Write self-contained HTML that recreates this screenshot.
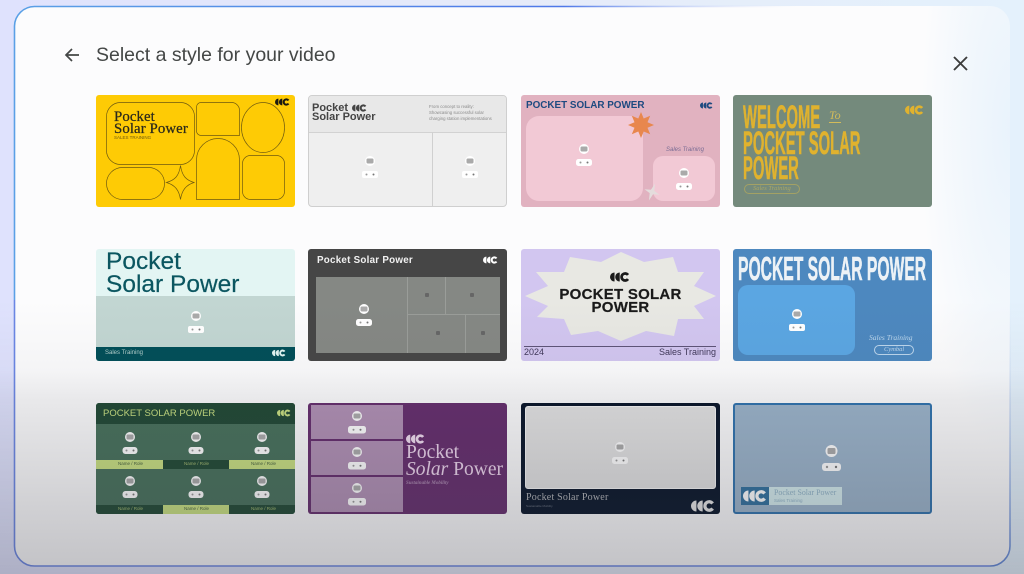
<!DOCTYPE html>
<html>
<head>
<meta charset="utf-8">
<style>
html,body{margin:0;padding:0;width:1024px;height:574px;overflow:hidden}
body{position:relative;background:linear-gradient(90deg,#dfe2fd 0%,#e6ebf9 50%,#e4f1fc 100%);font-family:"Liberation Sans",sans-serif}
#root{position:absolute;left:0;top:0;width:1024px;height:574px;filter:blur(.35px)}
#panel{position:absolute;left:14px;top:6px;width:996px;height:560px;border-radius:20px;background:radial-gradient(ellipse 90px 330px at 100% 22%,#e9f3fc 0,rgba(233,243,252,.5) 55%,rgba(252,252,253,0) 100%),#fcfcfd}
#frame{position:absolute;left:0;top:0}
#dim{position:absolute;left:0;top:0;width:1024px;height:574px;pointer-events:none;background:linear-gradient(180deg,rgba(60,60,70,0) 0,rgba(60,60,70,0) 300px,rgba(60,60,70,.04) 370px,rgba(60,60,70,.1) 400px,rgba(60,60,70,.23) 510px,rgba(60,60,70,.3) 574px)}
.card{position:absolute;width:199px;height:112px;border-radius:3px;overflow:hidden;box-sizing:border-box}
.a{position:absolute}
.t{position:absolute;line-height:1;white-space:nowrap}
.ph{position:absolute;display:block}
.logo{position:absolute;display:block}
.cond{font-weight:700;transform-origin:0 0;-webkit-text-stroke:.55px currentColor}
.ser{font-family:"Liberation Serif",serif}
</style>
</head>
<body>
<div id="root">
<div id="panel"></div>
<svg id="frame" width="1024" height="574" viewBox="0 0 1024 574" fill="none" stroke-width="1.6">
<defs>
<linearGradient id="g1" gradientUnits="userSpaceOnUse" x1="14" y1="0" x2="800" y2="0"><stop offset="0" stop-color="#5aa0e6"/><stop offset=".7" stop-color="#4f78e8"/><stop offset="1" stop-color="#dfe6fa" stop-opacity="0"/></linearGradient>
<linearGradient id="g2" gradientUnits="userSpaceOnUse" x1="0" y1="566" x2="0" y2="300"><stop offset="0" stop-color="#5f86d8"/><stop offset="1" stop-color="#cfe0f6" stop-opacity="0"/></linearGradient>
</defs>
<path d="M14.5 300V26A20 20 0 0 1 34.5 6.5H800" stroke="url(#g1)"/>
<path d="M14.5 300V546A20 20 0 0 0 34.5 566H990" stroke="#6a86e4"/>
<path d="M990 566A20 20 0 0 0 1010 546V300" stroke="url(#g2)"/>
</svg>

<svg class="a" style="left:64px;top:47px" width="16" height="16" viewBox="0 0 16 16" fill="none" stroke="#444746" stroke-width="1.7"><path d="M15 8H2M8 2L2 8l6 6"/></svg>
<div class="t" style="left:96px;top:46px;font-size:19.5px;color:#444746">Select a style for your video</div>
<svg class="a" style="left:953px;top:56px" width="15" height="15" viewBox="0 0 15 15" fill="none" stroke="#3c3c3c" stroke-width="1.9"><path d="M1 1L14 14M14 1L1 14"/></svg>

<!-- Card 1 -->
<div class="card" style="left:96px;top:95px;background:#fecb05">
<svg class="a" style="left:0;top:0" width="199" height="112" viewBox="96 95 199 112" fill="none" stroke="#6f5a10" stroke-width=".7">
<rect x="106.5" y="102.5" width="88" height="62" rx="14"/>
<path d="M196.5 107a4.5 4.5 0 0 1 4.5-4.5h30a8 8 0 0 1 8.5 8.5v24.5h-38.5a4.5 4.5 0 0 1-4.5-4.5z"/>
<ellipse cx="263" cy="127.5" rx="21.5" ry="25"/>
<path d="M196.5 199.5V160a21.5 21.5 0 0 1 43 0v39.5z"/>
<rect x="242.5" y="155.5" width="42" height="44" rx="8"/>
<rect x="106.5" y="167.5" width="58" height="32" rx="16"/>
<path d="M180.5 165.5C182 176 186 180 194 182.5C186 185 182 190 180.5 199.5C179 190 175 185 166.5 182.5C175 180 179 176 180.5 165.5Z"/>
</svg>
<div class="t ser" style="left:18px;top:16px;font-size:14.8px;line-height:12px;color:#2b2a1c;letter-spacing:.1px;-webkit-text-stroke:.25px #2b2a1c">Pocket<br>Solar Power</div>
<div class="t" style="left:18px;top:41px;font-size:4.5px;color:#6f5a10">SALES TRAINING</div>
<svg class="logo" style="left:179px;top:3px" width="15" height="8" viewBox="0 0 22 11"><path d="M5 .5A5 5 0 0 0 5 10.5ZM10.7 .5A5 5 0 0 0 10.7 10.5Z" fill="#1c1a10"/><path d="M19.8 3.2A3.9 3.9 0 1 0 19.8 7.8" fill="none" stroke="#1c1a10" stroke-width="3"/></svg>
</div>

<!-- Card 2 -->
<div class="card" style="left:308px;top:95px;background:#efefef;border:1px solid #cfcfcf;border-radius:4px">
<div class="a" style="left:0;top:0;width:197px;height:36px;background:#e8e8e8;border-bottom:1px solid #d2d2d2"></div>
<div class="a" style="left:123px;top:36px;width:1px;height:75px;background:#d0d0d0"></div>
<div class="t" style="left:3px;top:7.5px;font-size:11px;line-height:9px;font-weight:700;color:#444">Pocket<br>Solar Power</div>
<svg class="logo" style="left:43px;top:8px" width="15" height="8" viewBox="0 0 22 11"><path d="M5 .5A5 5 0 0 0 5 10.5ZM10.7 .5A5 5 0 0 0 10.7 10.5Z" fill="#444"/><path d="M19.8 3.2A3.9 3.9 0 1 0 19.8 7.8" fill="none" stroke="#444" stroke-width="3"/></svg>
<div class="t" style="left:120px;top:8px;font-size:4.3px;line-height:6px;color:#8a8a8a">From concept to reality:<br>Showcasing successful solar<br>charging station implementations</div>
<svg class="ph" style="left:52px;top:60px" width="18" height="24" viewBox="0 0 18 24"><circle cx="9" cy="5" r="5" fill="#fff"/><rect x="5.5" y="2.5" width="7" height="5" rx="1.2" fill="#aaa"/><rect x="1" y="15" width="16" height="7" rx="2" fill="#fff"/><circle cx="5.5" cy="18.5" r="1" fill="#999"/><circle cx="12.5" cy="18.5" r="1" fill="#777"/></svg>
<svg class="ph" style="left:151.5px;top:60px" width="18" height="24" viewBox="0 0 18 24"><circle cx="9" cy="5" r="5" fill="#fff"/><rect x="5.5" y="2.5" width="7" height="5" rx="1.2" fill="#aaa"/><rect x="1" y="15" width="16" height="7" rx="2" fill="#fff"/><circle cx="5.5" cy="18.5" r="1" fill="#999"/><circle cx="12.5" cy="18.5" r="1" fill="#777"/></svg>
</div>

<!-- Card 3 -->
<div class="card" style="left:521px;top:95px;background:#e1b2c0">
<div class="a" style="left:5px;top:21px;width:117px;height:85px;border-radius:13px;background:#f2c9d5"></div>
<div class="a" style="left:132px;top:61px;width:62px;height:45px;border-radius:10px;background:#f2c9d5"></div>
<div class="t" style="left:5px;top:5.5px;font-size:9.9px;font-weight:700;color:#1d4a80">POCKET SOLAR POWER</div>
<svg class="logo" style="left:179px;top:6.5px" width="13" height="7" viewBox="0 0 22 11"><path d="M5 .5A5 5 0 0 0 5 10.5ZM10.7 .5A5 5 0 0 0 10.7 10.5Z" fill="#1d4a80"/><path d="M19.8 3.2A3.9 3.9 0 1 0 19.8 7.8" fill="none" stroke="#1d4a80" stroke-width="3"/></svg>
<svg class="a" style="left:0;top:0" width="199" height="112" viewBox="0 0 199 112"><polygon transform="translate(120 30)" fill="#e8874e" points="0,-13 2.7,-6.5 9.2,-9.2 6.5,-2.7 13,0 6.5,2.7 9.2,9.2 2.7,6.5 0,13 -2.7,6.5 -9.2,9.2 -6.5,2.7 -13,0 -6.5,-2.7 -9.2,-9.2 -2.7,-6.5"/><polygon transform="translate(131 97) rotate(20)" fill="#e4dcdc" points="0,-9 1.8,-1.8 8,0 1.8,1.8 0,9 -1.8,1.8 -8,0 -1.8,-1.8"/></svg>
<div class="t" style="left:145px;top:52px;font-size:6px;font-style:italic;color:#7a6c94">Sales Training</div>
<svg class="ph" style="left:54px;top:49px" width="18" height="24" viewBox="0 0 18 24"><circle cx="9" cy="5" r="5" fill="#fff"/><rect x="5.5" y="2.5" width="7" height="5" rx="1.2" fill="#aaa"/><rect x="1" y="15" width="16" height="7" rx="2.5" fill="#fff"/><circle cx="5.5" cy="18.5" r="1" fill="#999"/><circle cx="12.5" cy="18.5" r="1" fill="#777"/></svg>
<svg class="ph" style="left:153.5px;top:73px" width="18" height="24" viewBox="0 0 18 24"><circle cx="9" cy="5" r="5" fill="#fff"/><rect x="5.5" y="2.5" width="7" height="5" rx="1.2" fill="#aaa"/><rect x="1" y="15" width="16" height="7" rx="2.5" fill="#fff"/><circle cx="5.5" cy="18.5" r="1" fill="#999"/><circle cx="12.5" cy="18.5" r="1" fill="#777"/></svg>
</div>

<!-- Card 4 -->
<div class="card" style="left:733px;top:95px;background:#748a7c">
<div class="t cond" style="left:10px;top:10px;font-size:32.5px;line-height:25.5px;color:#e0b22e;transform:scaleX(.455)">WELCOME<br>POCKET SOLAR<br>POWER</div>
<div class="t ser" style="left:96px;top:14px;font-size:12px;font-style:italic;color:#d3bb5a;border-bottom:1px solid #d3bb5a;padding-bottom:1px">To</div>
<div class="a" style="left:11px;top:89px;width:56px;height:10px;border:1px solid #a3a164;border-radius:6px;box-sizing:border-box"></div>
<div class="t ser" style="left:20px;top:91px;font-size:6.5px;font-style:italic;color:#a8a666">Sales Training</div>
<svg class="logo" style="left:172px;top:10px" width="19" height="10" viewBox="0 0 22 11"><path d="M5 .5A5 5 0 0 0 5 10.5ZM10.7 .5A5 5 0 0 0 10.7 10.5Z" fill="#e0b22e"/><path d="M19.8 3.2A3.9 3.9 0 1 0 19.8 7.8" fill="none" stroke="#e0b22e" stroke-width="3"/></svg>
</div>

<!-- Card 5 -->
<div class="card" style="left:96px;top:249px;background:#e3f5f3">
<div class="a" style="left:0;top:47px;width:199px;height:51px;background:#c2d6d2"></div>
<div class="a" style="left:0;top:98px;width:199px;height:14px;background:#014f58"></div>
<div class="t" style="left:10px;top:2px;font-size:24.5px;line-height:22.5px;color:#0b5660;-webkit-text-stroke:.2px #0b5660">Pocket<br>Solar Power</div>
<div class="t" style="left:9px;top:101px;font-size:6px;color:#b4cfcc">Sales Training</div>
<svg class="logo" style="left:176px;top:100px" width="14" height="8" viewBox="0 0 22 11"><path d="M5 .5A5 5 0 0 0 5 10.5ZM10.7 .5A5 5 0 0 0 10.7 10.5Z" fill="#e3f5f3"/><path d="M19.8 3.2A3.9 3.9 0 1 0 19.8 7.8" fill="none" stroke="#e3f5f3" stroke-width="3"/></svg>
<svg class="ph" style="left:91px;top:62px" width="18" height="24" viewBox="0 0 18 24"><circle cx="9" cy="5" r="5" fill="#fff"/><rect x="5.5" y="2.5" width="7" height="5" rx="1.2" fill="#aaa"/><rect x="1" y="15" width="16" height="7" rx="2" fill="#fff"/><circle cx="5.5" cy="18.5" r="1" fill="#999"/><circle cx="12.5" cy="18.5" r="1" fill="#777"/></svg>
</div>

<!-- Card 6 -->
<div class="card" style="left:308px;top:249px;background:#464646">
<div class="a" style="left:8px;top:28px;width:184px;height:76px;background:#858884"></div>
<div class="a" style="left:99px;top:28px;width:1px;height:76px;background:#9a9d99"></div>
<div class="a" style="left:99px;top:65px;width:93px;height:1px;background:#9a9d99"></div>
<div class="a" style="left:137px;top:28px;width:1px;height:37px;background:#9a9d99"></div>
<div class="a" style="left:157px;top:65px;width:1px;height:39px;background:#9a9d99"></div>
<div class="a" style="left:117px;top:44px;width:4px;height:4px;background:#666;border-radius:1px"></div>
<div class="a" style="left:162px;top:44px;width:4px;height:4px;background:#666;border-radius:1px"></div>
<div class="a" style="left:128px;top:82px;width:4px;height:4px;background:#666;border-radius:1px"></div>
<div class="a" style="left:173px;top:82px;width:4px;height:4px;background:#666;border-radius:1px"></div>
<div class="t" style="left:9px;top:6.5px;font-size:9.8px;font-weight:700;color:#f2f2f2;letter-spacing:.25px">Pocket Solar Power</div>
<svg class="logo" style="left:175px;top:6.5px" width="15" height="8" viewBox="0 0 22 11"><path d="M5 .5A5 5 0 0 0 5 10.5ZM10.7 .5A5 5 0 0 0 10.7 10.5Z" fill="#fff"/><path d="M19.8 3.2A3.9 3.9 0 1 0 19.8 7.8" fill="none" stroke="#fff" stroke-width="3"/></svg>
<svg class="ph" style="left:47px;top:55px" width="18" height="24" viewBox="0 0 18 24"><circle cx="9" cy="5" r="5" fill="#fff"/><rect x="5.5" y="2.5" width="7" height="5" rx="1.2" fill="#aaa"/><rect x="1" y="15" width="16" height="7" rx="2.5" fill="#fff"/><circle cx="5.5" cy="18.5" r="1" fill="#999"/><circle cx="12.5" cy="18.5" r="1" fill="#777"/></svg>
</div>

<!-- Card 7 -->
<div class="card" style="left:521px;top:249px;background:#d2c6f0">
<svg class="a" style="left:0;top:0" width="199" height="112" viewBox="0 0 199 112"><polygon fill="#e8e8e3" points="100,3 123,13 152,8 157,23 183,23 173,37 195,47 173,57 183,70 157,70 153,87 125,82 100,92 77,82 50,86 43,70 16,68 27,57 4,47 27,37 15,23 43,23 49,8 80,13"/></svg>
<svg class="logo" style="left:89px;top:23px" width="20" height="10" viewBox="0 0 22 11"><path d="M5 .5A5 5 0 0 0 5 10.5ZM10.7 .5A5 5 0 0 0 10.7 10.5Z" fill="#1a1a1a"/><path d="M19.8 3.2A3.9 3.9 0 1 0 19.8 7.8" fill="none" stroke="#1a1a1a" stroke-width="3"/></svg>
<div class="t" style="left:0;top:38.5px;width:199px;text-align:center;font-size:15px;line-height:13px;font-weight:700;color:#1a1a1a;letter-spacing:.25px;-webkit-text-stroke:.2px #1a1a1a">POCKET SOLAR<br>POWER</div>
<div class="a" style="left:3px;top:96.5px;width:192px;height:1px;background:#5e5478"></div>
<div class="t" style="left:3px;top:99px;font-size:9px;color:#40385a">2024</div>
<div class="t" style="right:4px;top:99px;font-size:9px;color:#40385a">Sales Training</div>
</div>

<!-- Card 8 -->
<div class="card" style="left:733px;top:249px;background:#4d88bf">
<div class="t cond" style="left:5px;top:3px;font-size:33px;color:#edf2f6;transform:scaleX(.475)">POCKET SOLAR POWER</div>
<div class="a" style="left:5px;top:36px;width:117px;height:70px;border-radius:10px;background:#5ba6e2"></div>
<div class="t ser" style="left:136px;top:85px;font-size:7.5px;font-style:italic;color:#bcd6ec">Sales Training</div>
<div class="a" style="left:141px;top:96px;width:40px;height:10px;border:1px solid #bcd6ec;border-radius:6px;box-sizing:border-box"></div>
<div class="t ser" style="left:151px;top:98px;font-size:6.5px;font-style:italic;color:#bcd6ec">Cymbal</div>
<svg class="ph" style="left:55px;top:60px" width="18" height="24" viewBox="0 0 18 24"><circle cx="9" cy="5" r="5" fill="#fff"/><rect x="5.5" y="2.5" width="7" height="5" rx="1.2" fill="#aaa"/><rect x="1" y="15" width="16" height="7" rx="2" fill="#fff"/><circle cx="5.5" cy="18.5" r="1" fill="#999"/><circle cx="12.5" cy="18.5" r="1" fill="#777"/></svg>
</div>

<!-- Card 9 -->
<div class="card" style="left:96px;top:403px;height:111px;background:#46705a">
<div class="a" style="left:0;top:0;width:199px;height:21px;background:#1f4833"></div>
<div class="a" style="left:0;top:57px;width:67px;height:9px;background:#c8e080"></div>
<div class="a" style="left:67px;top:57px;width:66px;height:9px;background:#1f4833"></div>
<div class="a" style="left:133px;top:57px;width:66px;height:9px;background:#c8e080"></div>
<div class="a" style="left:0;top:102px;width:67px;height:9px;background:#1f4833"></div>
<div class="a" style="left:67px;top:102px;width:66px;height:9px;background:#c8e080"></div>
<div class="a" style="left:133px;top:102px;width:66px;height:9px;background:#1f4833"></div>
<div class="t" style="left:7px;top:6px;font-size:9.5px;color:#c8e080">POCKET SOLAR POWER</div>
<svg class="logo" style="left:181px;top:6px" width="14" height="8" viewBox="0 0 22 11"><path d="M5 .5A5 5 0 0 0 5 10.5ZM10.7 .5A5 5 0 0 0 10.7 10.5Z" fill="#c8e080"/><path d="M19.8 3.2A3.9 3.9 0 1 0 19.8 7.8" fill="none" stroke="#c8e080" stroke-width="3"/></svg>
<div class="t" style="left:22px;top:59px;font-size:4.5px;color:#46603a">Name / Role</div>
<div class="t" style="left:88px;top:59px;font-size:4.5px;color:#a4bc70">Name / Role</div>
<div class="t" style="left:155px;top:59px;font-size:4.5px;color:#46603a">Name / Role</div>
<div class="t" style="left:22px;top:104px;font-size:4.5px;color:#a4bc70">Name / Role</div>
<div class="t" style="left:88px;top:104px;font-size:4.5px;color:#46603a">Name / Role</div>
<div class="t" style="left:155px;top:104px;font-size:4.5px;color:#a4bc70">Name / Role</div>
<svg class="ph" style="left:25px;top:29px" width="18" height="24" viewBox="0 0 18 24"><circle cx="9" cy="5" r="5" fill="#fff"/><rect x="5.5" y="2.5" width="7" height="5" rx="1.2" fill="#aaa"/><rect x="1.5" y="15" width="15" height="7" rx="3" fill="#fff"/><circle cx="5.5" cy="18.5" r="1" fill="#999"/><circle cx="12.5" cy="18.5" r="1" fill="#777"/></svg>
<svg class="ph" style="left:91px;top:29px" width="18" height="24" viewBox="0 0 18 24"><circle cx="9" cy="5" r="5" fill="#fff"/><rect x="5.5" y="2.5" width="7" height="5" rx="1.2" fill="#aaa"/><rect x="1.5" y="15" width="15" height="7" rx="3" fill="#fff"/><circle cx="5.5" cy="18.5" r="1" fill="#999"/><circle cx="12.5" cy="18.5" r="1" fill="#777"/></svg>
<svg class="ph" style="left:157px;top:29px" width="18" height="24" viewBox="0 0 18 24"><circle cx="9" cy="5" r="5" fill="#fff"/><rect x="5.5" y="2.5" width="7" height="5" rx="1.2" fill="#aaa"/><rect x="1.5" y="15" width="15" height="7" rx="3" fill="#fff"/><circle cx="5.5" cy="18.5" r="1" fill="#999"/><circle cx="12.5" cy="18.5" r="1" fill="#777"/></svg>
<svg class="ph" style="left:25px;top:73px" width="18" height="24" viewBox="0 0 18 24"><circle cx="9" cy="5" r="5" fill="#fff"/><rect x="5.5" y="2.5" width="7" height="5" rx="1.2" fill="#aaa"/><rect x="1.5" y="15" width="15" height="7" rx="3" fill="#fff"/><circle cx="5.5" cy="18.5" r="1" fill="#999"/><circle cx="12.5" cy="18.5" r="1" fill="#777"/></svg>
<svg class="ph" style="left:91px;top:73px" width="18" height="24" viewBox="0 0 18 24"><circle cx="9" cy="5" r="5" fill="#fff"/><rect x="5.5" y="2.5" width="7" height="5" rx="1.2" fill="#aaa"/><rect x="1.5" y="15" width="15" height="7" rx="3" fill="#fff"/><circle cx="5.5" cy="18.5" r="1" fill="#999"/><circle cx="12.5" cy="18.5" r="1" fill="#777"/></svg>
<svg class="ph" style="left:157px;top:73px" width="18" height="24" viewBox="0 0 18 24"><circle cx="9" cy="5" r="5" fill="#fff"/><rect x="5.5" y="2.5" width="7" height="5" rx="1.2" fill="#aaa"/><rect x="1.5" y="15" width="15" height="7" rx="3" fill="#fff"/><circle cx="5.5" cy="18.5" r="1" fill="#999"/><circle cx="12.5" cy="18.5" r="1" fill="#777"/></svg>
</div>

<!-- Card 10 -->
<div class="card" style="left:308px;top:403px;height:111px;background:#642c6c">
<div class="a" style="left:3px;top:2px;width:92px;height:34px;background:#b08fb4"></div>
<div class="a" style="left:3px;top:38px;width:92px;height:34px;background:#b08fb4"></div>
<div class="a" style="left:3px;top:74px;width:92px;height:35px;background:#b08fb4"></div>
<svg class="logo" style="left:98px;top:31px" width="19" height="10" viewBox="0 0 22 11"><path d="M5 .5A5 5 0 0 0 5 10.5ZM10.7 .5A5 5 0 0 0 10.7 10.5Z" fill="#f0dcf0"/><path d="M19.8 3.2A3.9 3.9 0 1 0 19.8 7.8" fill="none" stroke="#f0dcf0" stroke-width="3"/></svg>
<div class="t ser" style="left:98px;top:41px;font-size:19.5px;line-height:17px;color:#ecd4ec">Pocket<br><i>Solar</i> Power</div>
<div class="t ser" style="left:98px;top:78px;font-size:5px;font-style:italic;font-weight:700;color:#a884ac">Sustainable Mobility</div>
<svg class="ph" style="left:40px;top:8px" width="18" height="24" viewBox="0 0 18 24"><circle cx="9" cy="5" r="5" fill="#fff"/><rect x="5.5" y="2.5" width="7" height="5" rx="1.2" fill="#aaa"/><rect x="0" y="15" width="18" height="7.5" rx="2.5" fill="#fff"/><circle cx="5.5" cy="18.7" r="1" fill="#999"/><circle cx="12.5" cy="18.7" r="1" fill="#777"/></svg>
<svg class="ph" style="left:40px;top:44px" width="18" height="24" viewBox="0 0 18 24"><circle cx="9" cy="5" r="5" fill="#fff"/><rect x="5.5" y="2.5" width="7" height="5" rx="1.2" fill="#aaa"/><rect x="0" y="15" width="18" height="7.5" rx="2.5" fill="#fff"/><circle cx="5.5" cy="18.7" r="1" fill="#999"/><circle cx="12.5" cy="18.7" r="1" fill="#777"/></svg>
<svg class="ph" style="left:40px;top:80px" width="18" height="24" viewBox="0 0 18 24"><circle cx="9" cy="5" r="5" fill="#fff"/><rect x="5.5" y="2.5" width="7" height="5" rx="1.2" fill="#aaa"/><rect x="0" y="15" width="18" height="7.5" rx="2.5" fill="#fff"/><circle cx="5.5" cy="18.7" r="1" fill="#999"/><circle cx="12.5" cy="18.7" r="1" fill="#777"/></svg>
</div>

<!-- Card 11 -->
<div class="card" style="left:521px;top:403px;height:111px;background:#071428">
<div class="a" style="left:4px;top:3px;width:191px;height:83px;border-radius:3px;background:#e2e2e2;border:1px solid #f6f6f6;box-sizing:border-box"></div>
<div class="t ser" style="left:5px;top:90px;font-size:10px;color:#b2b4b8;letter-spacing:.2px">Pocket Solar Power</div>
<div class="t" style="left:5px;top:102px;font-size:3px;color:#6a7280">Sustainable Mobility</div>
<svg class="logo" style="left:170px;top:97px" width="24" height="12" viewBox="0 0 22 11"><path d="M5 .5A5 5 0 0 0 5 10.5ZM10.7 .5A5 5 0 0 0 10.7 10.5Z" fill="#e6e6e6"/><path d="M19.8 3.2A3.9 3.9 0 1 0 19.8 7.8" fill="none" stroke="#e6e6e6" stroke-width="3"/></svg>
<svg class="ph" style="left:90px;top:39px" width="18" height="24" viewBox="0 0 18 24"><circle cx="9" cy="5" r="5" fill="#fff"/><rect x="5.5" y="2.5" width="7" height="5" rx="1.2" fill="#aaa"/><rect x="1" y="15" width="16" height="7" rx="2.5" fill="#fff"/><circle cx="5.5" cy="18.5" r="1" fill="#999"/><circle cx="12.5" cy="18.5" r="1" fill="#777"/></svg>
</div>

<!-- Card 12 -->
<div class="card" style="left:733px;top:403px;height:111px;background:#9ab3ca;border:2px solid #2f72ad">
<svg class="ph" style="left:86px;top:40px" width="21" height="28" viewBox="0 0 21 28"><circle cx="10.5" cy="6" r="6" fill="#fff"/><rect x="6.5" y="3" width="8" height="6" rx="1.4" fill="#aaa"/><rect x="1" y="18" width="19" height="8" rx="3" fill="#fff"/><circle cx="6" cy="22" r="1.2" fill="#999"/><circle cx="15" cy="22" r="1.2" fill="#777"/></svg>
<div class="a" style="left:6px;top:82px;width:28px;height:18px;background:#30709e"></div>
<svg class="logo" style="left:8px;top:85px" width="24" height="12" viewBox="0 0 22 11"><path d="M5 .5A5 5 0 0 0 5 10.5ZM10.7 .5A5 5 0 0 0 10.7 10.5Z" fill="#fff"/><path d="M19.8 3.2A3.9 3.9 0 1 0 19.8 7.8" fill="none" stroke="#fff" stroke-width="3"/></svg>
<div class="a" style="left:34px;top:82px;width:73px;height:18px;background:#d4ecee"></div>
<div class="t ser" style="left:39px;top:84px;font-size:7.9px;color:#8fb2c6">Pocket Solar Power</div>
<div class="t" style="left:39px;top:94px;font-size:4.5px;color:#8fb2c6">Sales Training</div>
</div>

<div id="dim"></div>
</div>
</body>
</html>
